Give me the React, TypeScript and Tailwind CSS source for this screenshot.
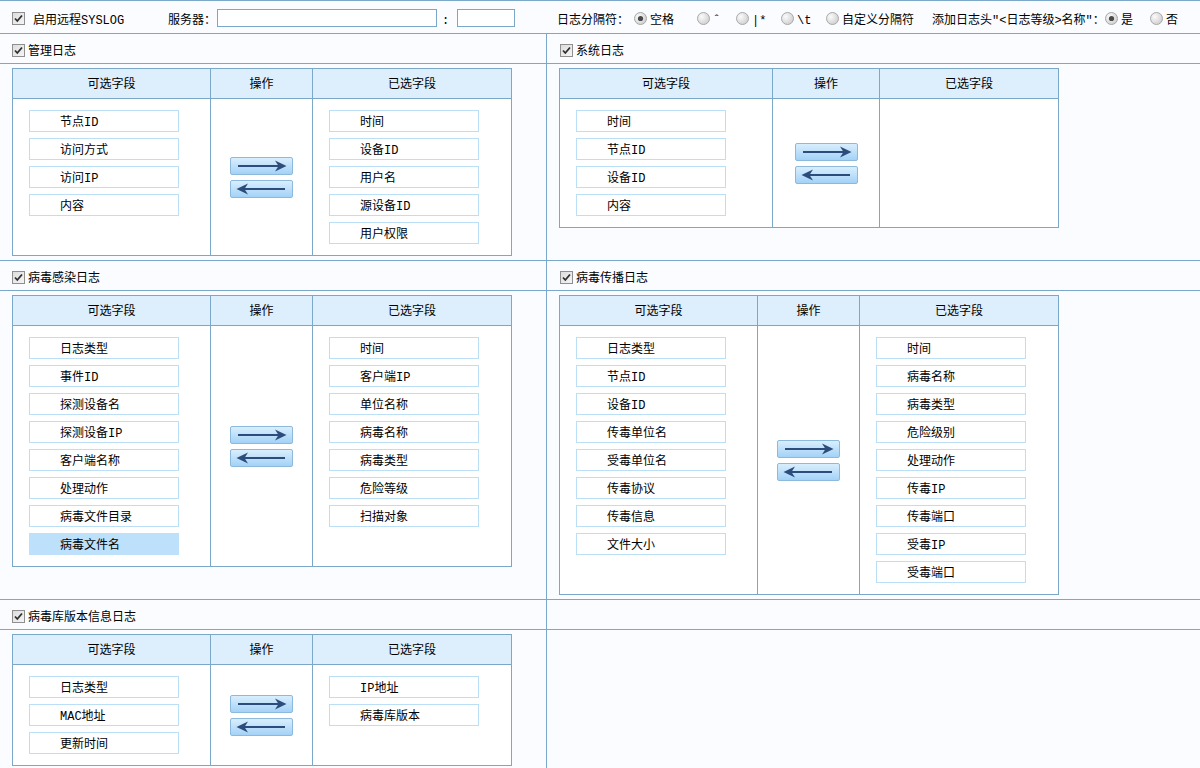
import React from 'react';

const LINE = 'border-[#7ba7c9]';

function CheckBox() {
  return (
    <svg width="13" height="13" viewBox="0 0 13 13" className="shrink-0">
      <defs>
        <linearGradient id="cbg" x1="0" y1="0" x2="1" y2="1">
          <stop offset="0" stopColor="#dcdcdc" />
          <stop offset="1" stopColor="#f6f6f6" />
        </linearGradient>
      </defs>
      <rect x="0.5" y="0.5" width="12" height="12" fill="url(#cbg)" stroke="#8f8f8f" />
      <path d="M3 6.5 L5.3 9 L10 3.5" fill="none" stroke="#2f2f2f" strokeWidth="1.8" />
    </svg>
  );
}

function Radio({ on }: { on?: boolean }) {
  return (
    <svg width="13" height="13" viewBox="0 0 13 13" className="shrink-0">
      <defs>
        <radialGradient id="rbg" cx="0.35" cy="0.35" r="0.8">
          <stop offset="0" stopColor="#fbfbfb" />
          <stop offset="1" stopColor="#c9c9c9" />
        </radialGradient>
      </defs>
      <circle cx="6.5" cy="6.5" r="6" fill="url(#rbg)" stroke="#a9a9a9" />
      {on && <circle cx="6.5" cy="6.5" r="2.6" fill="#4a4a4a" />}
    </svg>
  );
}

function RadioItem({ label, on, w }: { label: string; on?: boolean; w: string }) {
  return (
    <div className={`flex items-center gap-[3px] ${w}`}>
      <Radio on={on} />
      <span className="pt-[6px]">{label}</span>
    </div>
  );
}

function ArrowBtn({ dir }: { dir: 'r' | 'l' }) {
  return (
    <div className="w-[63px] h-[18px] rounded-[2px] border border-[#8cb9dc] bg-linear-to-b from-[#d9eefd] to-[#a3d2f7]">
      <svg width="61" height="16" viewBox="0 0 61 16">
        {dir === 'r' ? (
          <>
            <rect x="7" y="7" width="41" height="2" fill="#2c4d7b" />
            <path d="M44 2.5 L55.5 8 L44 13.5 L47.5 8 Z" fill="#2c4d7b" />
          </>
        ) : (
          <>
            <rect x="13" y="7" width="41" height="2" fill="#2c4d7b" />
            <path d="M17 2.5 L5.5 8 L17 13.5 L13.5 8 Z" fill="#2c4d7b" />
          </>
        )}
      </svg>
    </div>
  );
}

function Field({ label, active }: { label: string; active?: boolean }) {
  return (
    <div
      className={`h-[22px] w-[150px] border flex items-center pl-[30px] pt-[3px] ${
        active ? 'bg-[#bde0fb] border-[#bde0fb]' : 'bg-white border-[#bcdff8]'
      }`}
    >
      {label}
    </div>
  );
}

function FieldTable({ grid, left, right, active }: { grid: string; left: string[]; right: string[]; active?: string }) {
  const head = `h-[30px] pt-[2px] bg-[#ddeefc] border-b ${LINE} flex items-center justify-center`;
  return (
    <div className={`w-[500px] border ${LINE} bg-white grid ${grid}`}>
      <div className={`${head} border-r`}>可选字段</div>
      <div className={`${head} border-r`}>操作</div>
      <div className={head}>已选字段</div>
      <div className={`border-r ${LINE} flex flex-col gap-[6px] pl-[16px] py-[11px]`}>
        {left.map((f) => (
          <Field key={f} label={f} active={f === active} />
        ))}
      </div>
      <div className={`border-r ${LINE} flex flex-col items-center justify-center gap-[5px]`}>
        <ArrowBtn dir="r" />
        <ArrowBtn dir="l" />
      </div>
      <div className="flex flex-col gap-[6px] pl-[16px] py-[11px]">
        {right.map((f) => (
          <Field key={f} label={f} />
        ))}
      </div>
    </div>
  );
}

function SectionTitle({ label }: { label: string }) {
  return (
    <div className="h-[29px] flex items-center pl-[12px] pt-[4px] gap-[3px]">
      <CheckBox />
      <span className="pt-[2px]">{label}</span>
    </div>
  );
}

export default function App() {
  return (
    <div
      className="w-[1200px] h-[768px] overflow-hidden bg-[#fafcff] text-[12px] text-black"
      style={{ fontFamily: '"Liberation Mono", "Noto Sans CJK SC", monospace' }}
    >
      {/* top settings row */}
      <div className={`h-[34px] pt-[2px] border-t border-b ${LINE} flex items-center`}>
        <div className="w-[168px] flex items-center pl-[12px] gap-[8px]">
          <CheckBox />
          <span className="pt-[6px]">启用远程SYSLOG</span>
        </div>
        <span className="w-[49px] pt-[6px]">服务器：</span>
        <div className={`w-[220px] h-[18px] border ${LINE} bg-white`} />
        <span className="w-[20px] pl-[5px] pt-[6px]">:</span>
        <div className={`w-[58px] h-[18px] border ${LINE} bg-white`} />
        <div className="w-[42px]" />
        <span className="w-[77px] pt-[6px]">日志分隔符：</span>
        <RadioItem label="空格" on w="w-[63px]" />
        <RadioItem label="ˆ" w="w-[39px]" />
        <RadioItem label="|*" w="w-[45px]" />
        <RadioItem label="\t" w="w-[45px]" />
        <RadioItem label="自定义分隔符" w="w-[106px]" />
        <span className="w-[173px] pt-[6px]">添加日志头"&lt;日志等级&gt;名称"：</span>
        <RadioItem label="是" on w="w-[45px]" />
        <RadioItem label="否" w="w-[45px]" />
      </div>

      {/* 管理日志 / 系统日志 */}
      <div className={`flex border-b ${LINE}`}>
        <div className={`w-[547px] border-r ${LINE}`}>
          <SectionTitle label="管理日志" />
        </div>
        <div className="flex-1 pl-[1px]">
          <SectionTitle label="系统日志" />
        </div>
      </div>
      <div className={`flex border-b ${LINE}`}>
        <div className={`w-[547px] border-r ${LINE} py-[4px] pl-[12px]`}>
          <FieldTable
            grid="grid-cols-[198px_102px_198px]"
            left={['节点ID', '访问方式', '访问IP', '内容']}
            right={['时间', '设备ID', '用户名', '源设备ID', '用户权限']}
          />
        </div>
        <div className="flex-1 py-[4px] pl-[12px] flex items-start">
          <FieldTable
            grid="grid-cols-[213px_107px_178px]"
            left={['时间', '节点ID', '设备ID', '内容']}
            right={[]}
          />
        </div>
      </div>

      {/* 病毒感染日志 / 病毒传播日志 */}
      <div className={`flex border-b ${LINE}`}>
        <div className={`w-[547px] border-r ${LINE}`}>
          <SectionTitle label="病毒感染日志" />
        </div>
        <div className="flex-1 pl-[1px]">
          <SectionTitle label="病毒传播日志" />
        </div>
      </div>
      <div className={`flex border-b ${LINE}`}>
        <div className={`w-[547px] border-r ${LINE} py-[4px] pl-[12px] flex items-start`}>
          <FieldTable
            grid="grid-cols-[198px_102px_198px]"
            left={['日志类型', '事件ID', '探测设备名', '探测设备IP', '客户端名称', '处理动作', '病毒文件目录', '病毒文件名']}
            right={['时间', '客户端IP', '单位名称', '病毒名称', '病毒类型', '危险等级', '扫描对象']}
            active="病毒文件名"
          />
        </div>
        <div className="flex-1 py-[4px] pl-[12px]">
          <FieldTable
            grid="grid-cols-[198px_102px_198px]"
            left={['日志类型', '节点ID', '设备ID', '传毒单位名', '受毒单位名', '传毒协议', '传毒信息', '文件大小']}
            right={['时间', '病毒名称', '病毒类型', '危险级别', '处理动作', '传毒IP', '传毒端口', '受毒IP', '受毒端口']}
          />
        </div>
      </div>

      {/* 病毒库版本信息日志 */}
      <div className={`flex border-b ${LINE}`}>
        <div className={`w-[547px] border-r ${LINE}`}>
          <SectionTitle label="病毒库版本信息日志" />
        </div>
        <div className="flex-1" />
      </div>
      <div className="flex">
        <div className={`w-[547px] border-r ${LINE} py-[4px] pl-[12px]`}>
          <FieldTable
            grid="grid-cols-[198px_102px_198px]"
            left={['日志类型', 'MAC地址', '更新时间']}
            right={['IP地址', '病毒库版本']}
          />
        </div>
        <div className="flex-1" />
      </div>
    </div>
  );
}
